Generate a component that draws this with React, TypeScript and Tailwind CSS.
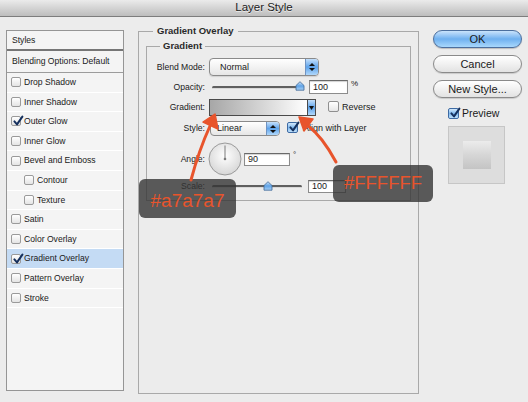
import React from "react";

function Box({ checked = false, blue = false, big = false }: { checked?: boolean; blue?: boolean; big?: boolean }) {
  const cls = blue
    ? "h-[11px] w-[11px] border-[#3d6aa3] bg-gradient-to-b from-[#d3e8fb] via-[#7fb9ee] to-[#bfe0fb]"
    : big
    ? "h-[11px] w-[11px] border-[#8f8f8f] bg-gradient-to-b from-[#ffffff] to-[#e6e6e6]"
    : "h-[10px] w-[10px] border-[#9a9a9a] bg-gradient-to-b from-[#ffffff] to-[#e4e4e4]";
  return (
    <span className={`relative inline-flex shrink-0 rounded-[2px] border ${cls}`}>
      {checked && (
        <svg viewBox="0 0 12 12" className="absolute left-[0px] top-[-2px] h-[12px] w-[12px] overflow-visible">
          <path d="M2.4 6.4 L5 9.4 L10.4 1.6" fill="none" stroke="#15305e" strokeWidth="2" strokeLinecap="round" strokeLinejoin="round" />
        </svg>
      )}
    </span>
  );
}

function Stepper() {
  return (
    <span className="flex h-full w-[13px] shrink-0 flex-col items-center justify-center gap-[2px] border-l border-[#6f93c2] bg-gradient-to-b from-[#c4e0fb] via-[#5ea3ea] to-[#b0d8fb]">
      <svg width="6" height="3" viewBox="0 0 6 3">
        <path d="M0 3 L3 0 L6 3Z" fill="#111" />
      </svg>
      <svg width="6" height="3" viewBox="0 0 6 3">
        <path d="M0 0 L3 3 L6 0Z" fill="#111" />
      </svg>
    </span>
  );
}

function Slider({ thumb }: { thumb: string }) {
  return (
    <div className="relative ml-[7px] flex h-full w-[90px] shrink-0 items-center">
      <div className="h-[3px] w-full rounded-full border-b border-[#d8d8d8] bg-[#5f5f5f]" />
      <svg viewBox="0 0 10 10" className={`absolute top-[1px] h-[10px] w-[10px] ${thumb}`}>
        <defs>
          <linearGradient id="tg" x1="0" y1="0" x2="0" y2="1">
            <stop offset="0" stopColor="#cfe6fb" />
            <stop offset="0.5" stopColor="#5fa2e6" />
            <stop offset="1" stopColor="#a9d2f7" />
          </linearGradient>
        </defs>
        <path d="M1 4.5 L5 0.7 L9 4.5 L9 9.2 L1 9.2 Z" fill="url(#tg)" stroke="#3f6796" strokeWidth="0.8" strokeLinejoin="round" />
      </svg>
    </div>
  );
}

function Field({ value, w }: { value: string; w: string }) {
  return (
    <div className={`flex h-full shrink-0 items-center border border-[#8c8c8c] border-t-[#6a6a6a] bg-white pl-[3px] text-[9px] shadow-[inset_0_1px_1px_rgba(0,0,0,0.18)] ${w}`}>
      {value}
    </div>
  );
}

const rows: { label: string; checked?: boolean; indent?: boolean; active?: boolean }[] = [
  { label: "Drop Shadow" },
  { label: "Inner Shadow" },
  { label: "Outer Glow", checked: true },
  { label: "Inner Glow" },
  { label: "Bevel and Emboss" },
  { label: "Contour", indent: true },
  { label: "Texture", indent: true },
  { label: "Satin" },
  { label: "Color Overlay" },
  { label: "Gradient Overlay", checked: true, active: true },
  { label: "Pattern Overlay" },
  { label: "Stroke" },
];

export default function App() {
  return (
    <div className="relative h-[402px] w-[528px] overflow-hidden bg-[#ececec] font-[family-name:'Liberation_Sans',Arial,sans-serif] text-[#1a1a1a]">
      {/* title bar */}
      <div className="flex h-[17px] items-center justify-center border-b border-[#7d7d7d] bg-gradient-to-b from-[#ebebeb] to-[#bdbdbd] text-[11.5px] leading-none text-[#222] [text-shadow:0_1px_0_rgba(255,255,255,0.6)]">
        Layer Style
      </div>

      <div className="flex items-start pl-[6px]">
        {/* left panel */}
        <div className="mt-[13px] flex h-[361px] w-[118px] shrink-0 flex-col border border-[#959595] bg-[#f4f4f4] text-[8.6px] leading-none">
          <div className="flex h-[20px] shrink-0 items-center border-b-2 border-[#767676] pl-[5px]">Styles</div>
          <div className="flex h-[22px] shrink-0 items-center border-b border-[#9c9c9c] pl-[5px]">Blending Options: Default</div>
          {rows.map((r) => (
            <div
              key={r.label}
              className={`flex h-[19.6px] shrink-0 items-center border-b border-white ${r.indent ? "pl-[17px]" : "pl-[4px]"} ${r.active ? "bg-[#c4dbf4]" : ""}`}
            >
              <Box checked={r.checked} />
              <span className="ml-[3px]">{r.label}</span>
            </div>
          ))}
        </div>

        {/* main */}
        <fieldset className="ml-[14px] mt-[8px] h-[369px] w-[281px] shrink-0 border border-[#a9a9a9]">
          <legend className="ml-[14px] px-[4px] text-[9.5px] font-bold leading-[12px] text-[#2a2a2a]">Gradient Overlay</legend>
          <fieldset className="mx-[7px] mt-[3px] h-[161px] border border-[#a9a9a9]">
            <legend className="ml-[13px] px-[3px] text-[9.5px] font-bold leading-[12px] text-[#2a2a2a]">Gradient</legend>
            <div className="flex flex-col text-[8.6px] leading-none">
              {/* blend mode */}
              <div className="mt-[6px] flex h-[18px] items-center">
                <span className="w-[58px] shrink-0 text-right">Blend Mode:</span>
                <div className="ml-[4px] flex h-full w-[110px] items-center overflow-hidden rounded-[4px] border border-[#8a8a8a] bg-gradient-to-b from-white to-[#e6e6e6] shadow-[0_1px_1px_rgba(0,0,0,0.12)]">
                  <span className="flex-1 pl-[10px] text-[9px]">Normal</span>
                  <Stepper />
                </div>
              </div>
              {/* opacity */}
              <div className="mt-[4px] flex h-[14px] items-center">
                <span className="w-[58px] shrink-0 text-right">Opacity:</span>
                <Slider thumb="left-[83px]" />
                <div className="ml-[7px] h-full">
                  <Field value="100" w="w-[39px]" />
                </div>
                <span className="ml-[3px] self-start text-[8px]">%</span>
              </div>
              {/* gradient */}
              <div className="mt-[5px] flex h-[17px] items-center">
                <span className="w-[58px] shrink-0 text-right">Gradient:</span>
                <div className="ml-[4px] flex h-full w-[107px] shrink-0 border border-[#4a4a4a]">
                  <div className="flex-1 bg-gradient-to-r from-[#a7a7a7] to-[#ffffff]" />
                  <div className="flex w-[8px] items-center justify-center border-l border-[#4a4a4a] bg-gradient-to-b from-[#c4e0fb] via-[#5ea3ea] to-[#b0d8fb]">
                    <svg width="5" height="4" viewBox="0 0 5 4">
                      <path d="M0 0 L5 0 L2.5 4Z" fill="#111" />
                    </svg>
                  </div>
                </div>
                <span className="ml-[12px]">
                  <Box big />
                </span>
                <span className="ml-[3px] text-[9px]">Reverse</span>
              </div>
              {/* style */}
              <div className="mt-[5px] flex h-[15px] items-center">
                <span className="w-[58px] shrink-0 text-right">Style:</span>
                <div className="ml-[5px] flex h-full w-[70px] shrink-0 items-center overflow-hidden rounded-[4px] border border-[#8a8a8a] bg-gradient-to-b from-white to-[#e6e6e6]">
                  <span className="flex-1 pl-[6px] text-[9px]">Linear</span>
                  <Stepper />
                </div>
                <span className="ml-[7px]">
                  <Box checked blue />
                </span>
                <span className="ml-[5px] text-[9px]">Align with Layer</span>
              </div>
              {/* angle */}
              <div className="mt-[6px] flex h-[34px] items-center">
                <span className="w-[58px] shrink-0 text-right">Angle:</span>
                <svg viewBox="0 0 34 34" className="ml-[3px] h-[34px] w-[34px] shrink-0">
                  <defs>
                    <radialGradient id="dial" cx="0.5" cy="0.4" r="0.6">
                      <stop offset="0" stopColor="#ffffff" />
                      <stop offset="1" stopColor="#d6d6d6" />
                    </radialGradient>
                  </defs>
                  <circle cx="17" cy="17" r="16" fill="url(#dial)" stroke="#9a9a9a" strokeWidth="1" />
                  <line x1="17" y1="17" x2="17" y2="3.5" stroke="#7a7a7a" strokeWidth="1" />
                  <circle cx="17" cy="17" r="1.3" fill="#7a7a7a" />
                </svg>
                <div className="ml-[2px] h-[13px]">
                  <Field value="90" w="w-[46px]" />
                </div>
                <span className="ml-[3px] self-start mt-[9px] text-[8px]">°</span>
              </div>
              {/* scale */}
              <div className="mt-[4px] flex h-[13px] items-center">
                <span className="w-[58px] shrink-0 text-right">Scale:</span>
                <Slider thumb="left-[51px]" />
                <div className="ml-[6px] h-full">
                  <Field value="100" w="w-[38px]" />
                </div>
              </div>
            </div>
          </fieldset>
        </fieldset>

        {/* right column */}
        <div className="ml-[14px] mt-[13px] flex w-[89px] shrink-0 flex-col text-[11px] leading-none">
          <div className="flex h-[18px] items-center justify-center rounded-full border border-[#4c6f9e] bg-gradient-to-b from-[#c9e3fb] via-[#6fb0ef] to-[#a8d8fc] shadow-[0_1px_1px_rgba(0,0,0,0.2)]">
            OK
          </div>
          <div className="mt-[7px] flex h-[18px] items-center justify-center rounded-full border border-[#8a8a8a] bg-gradient-to-b from-white via-[#f1f1f1] to-[#e2e2e2] shadow-[0_1px_1px_rgba(0,0,0,0.15)]">
            Cancel
          </div>
          <div className="mt-[7px] flex h-[18px] items-center justify-center rounded-full border border-[#8a8a8a] bg-gradient-to-b from-white via-[#f1f1f1] to-[#e2e2e2] shadow-[0_1px_1px_rgba(0,0,0,0.15)]">
            New Style...
          </div>
          <div className="mt-[10px] flex items-center pl-[15px]">
            <Box checked blue />
            <span className="ml-[3px] text-[10.5px]">Preview</span>
          </div>
          <div className="ml-[15px] mt-[7px] flex h-[58px] w-[57px] items-center justify-center border border-[#c6c6c6] bg-[#dddddd]">
            <div className="h-[28px] w-[28px] bg-gradient-to-b from-[#ececec] via-[#d6d6d6] to-[#c4c4c4]" />
          </div>
        </div>
      </div>

      {/* annotations */}
      <div className="absolute left-[139px] top-[179px] flex h-[39px] w-[97px] items-center justify-center rounded-[6px] bg-[rgba(52,52,52,0.8)] pt-[3px] text-[19px] leading-none text-[#e8542c]">
        #a7a7a7
      </div>
      <div className="absolute left-[333px] top-[165px] flex h-[37px] w-[100px] items-center justify-center rounded-[6px] bg-[rgba(52,52,52,0.8)] text-[18.5px] leading-none text-[#e8542c]">
        #FFFFFF
      </div>
      <svg className="pointer-events-none absolute left-0 top-0 h-[402px] w-[528px]" viewBox="0 0 528 402">
        <path d="M191 180 Q 199 150 210 126" fill="none" stroke="#e8542c" strokeWidth="3" strokeLinecap="round" />
        <path d="M215 114 L218 129 L203 122 Z" fill="#e8542c" stroke="#e8542c" strokeWidth="1.5" strokeLinejoin="round" />
        <path d="M336 162 Q 322 136 307 125" fill="none" stroke="#e8542c" strokeWidth="3" strokeLinecap="round" />
        <path d="M299 117 L313 119 L304 131 Z" fill="#e8542c" stroke="#e8542c" strokeWidth="1.5" strokeLinejoin="round" />
      </svg>
    </div>
  );
}
